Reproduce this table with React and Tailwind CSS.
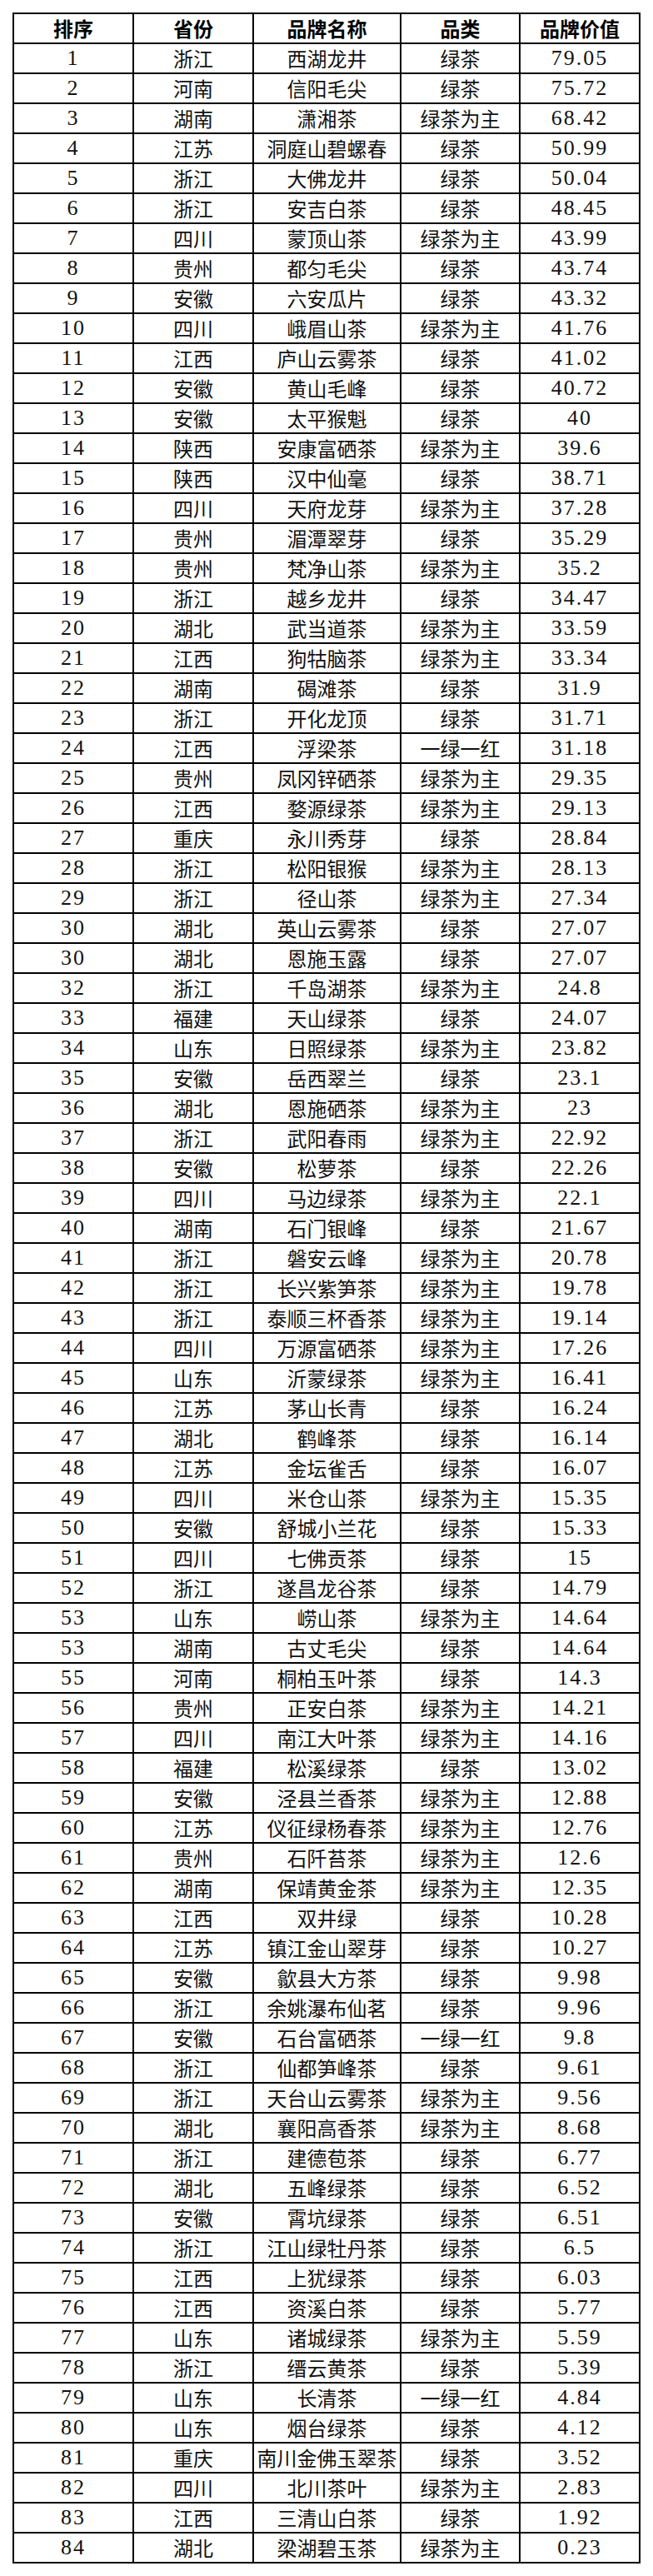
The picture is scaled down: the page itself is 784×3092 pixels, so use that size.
import React from "react";

const raw = `1|浙江|西湖龙井|绿茶|79.05
2|河南|信阳毛尖|绿茶|75.72
3|湖南|潇湘茶|绿茶为主|68.42
4|江苏|洞庭山碧螺春|绿茶|50.99
5|浙江|大佛龙井|绿茶|50.04
6|浙江|安吉白茶|绿茶|48.45
7|四川|蒙顶山茶|绿茶为主|43.99
8|贵州|都匀毛尖|绿茶|43.74
9|安徽|六安瓜片|绿茶|43.32
10|四川|峨眉山茶|绿茶为主|41.76
11|江西|庐山云雾茶|绿茶|41.02
12|安徽|黄山毛峰|绿茶|40.72
13|安徽|太平猴魁|绿茶|40
14|陕西|安康富硒茶|绿茶为主|39.6
15|陕西|汉中仙毫|绿茶|38.71
16|四川|天府龙芽|绿茶为主|37.28
17|贵州|湄潭翠芽|绿茶|35.29
18|贵州|梵净山茶|绿茶为主|35.2
19|浙江|越乡龙井|绿茶|34.47
20|湖北|武当道茶|绿茶为主|33.59
21|江西|狗牯脑茶|绿茶为主|33.34
22|湖南|碣滩茶|绿茶|31.9
23|浙江|开化龙顶|绿茶|31.71
24|江西|浮梁茶|一绿一红|31.18
25|贵州|凤冈锌硒茶|绿茶为主|29.35
26|江西|婺源绿茶|绿茶为主|29.13
27|重庆|永川秀芽|绿茶|28.84
28|浙江|松阳银猴|绿茶为主|28.13
29|浙江|径山茶|绿茶为主|27.34
30|湖北|英山云雾茶|绿茶|27.07
30|湖北|恩施玉露|绿茶|27.07
32|浙江|千岛湖茶|绿茶为主|24.8
33|福建|天山绿茶|绿茶|24.07
34|山东|日照绿茶|绿茶为主|23.82
35|安徽|岳西翠兰|绿茶|23.1
36|湖北|恩施硒茶|绿茶为主|23
37|浙江|武阳春雨|绿茶为主|22.92
38|安徽|松萝茶|绿茶|22.26
39|四川|马边绿茶|绿茶为主|22.1
40|湖南|石门银峰|绿茶|21.67
41|浙江|磐安云峰|绿茶为主|20.78
42|浙江|长兴紫笋茶|绿茶为主|19.78
43|浙江|泰顺三杯香茶|绿茶为主|19.14
44|四川|万源富硒茶|绿茶为主|17.26
45|山东|沂蒙绿茶|绿茶为主|16.41
46|江苏|茅山长青|绿茶|16.24
47|湖北|鹤峰茶|绿茶|16.14
48|江苏|金坛雀舌|绿茶|16.07
49|四川|米仓山茶|绿茶为主|15.35
50|安徽|舒城小兰花|绿茶|15.33
51|四川|七佛贡茶|绿茶|15
52|浙江|遂昌龙谷茶|绿茶|14.79
53|山东|崂山茶|绿茶为主|14.64
53|湖南|古丈毛尖|绿茶|14.64
55|河南|桐柏玉叶茶|绿茶|14.3
56|贵州|正安白茶|绿茶为主|14.21
57|四川|南江大叶茶|绿茶为主|14.16
58|福建|松溪绿茶|绿茶|13.02
59|安徽|泾县兰香茶|绿茶为主|12.88
60|江苏|仪征绿杨春茶|绿茶为主|12.76
61|贵州|石阡苔茶|绿茶为主|12.6
62|湖南|保靖黄金茶|绿茶为主|12.35
63|江西|双井绿|绿茶|10.28
64|江苏|镇江金山翠芽|绿茶|10.27
65|安徽|歙县大方茶|绿茶|9.98
66|浙江|余姚瀑布仙茗|绿茶|9.96
67|安徽|石台富硒茶|一绿一红|9.8
68|浙江|仙都笋峰茶|绿茶|9.61
69|浙江|天台山云雾茶|绿茶为主|9.56
70|湖北|襄阳高香茶|绿茶为主|8.68
71|浙江|建德苞茶|绿茶|6.77
72|湖北|五峰绿茶|绿茶|6.52
73|安徽|霄坑绿茶|绿茶|6.51
74|浙江|江山绿牡丹茶|绿茶|6.5
75|江西|上犹绿茶|绿茶|6.03
76|江西|资溪白茶|绿茶|5.77
77|山东|诸城绿茶|绿茶为主|5.59
78|浙江|缙云黄茶|绿茶|5.39
79|山东|长清茶|一绿一红|4.84
80|山东|烟台绿茶|绿茶|4.12
81|重庆|南川金佛玉翠茶|绿茶|3.52
82|四川|北川茶叶|绿茶为主|2.83
83|江西|三清山白茶|绿茶|1.92
84|湖北|梁湖碧玉茶|绿茶为主|0.23`;

const rows = raw.split("\n").map((l) => l.split("|"));

const cell =
  "flex items-center justify-center overflow-hidden whitespace-nowrap border-r-2 border-b-2 border-black h-[36px]";
const cjk =
  "font-['Noto_Sans_CJK_SC',sans-serif] text-[24px] leading-none text-[#111]";
const num =
  "font-['Liberation_Serif',serif] text-[26px] leading-none tracking-[2px] text-[#111]";

export default function App() {
  return (
    <div className="min-h-[3092px] w-[784px] bg-white pt-[15px] pl-[15px]">
      <div className="w-[754px] border-t-2 border-l-2 border-black">
        <div className="grid grid-cols-[144px_144px_177px_143px_144px]">
          {["排序", "省份", "品牌名称", "品类", "品牌价值"].map((h) => (
            <div key={h} className={cell}>
              <span className={cjk + " font-bold text-black"}>{h}</span>
            </div>
          ))}
          {rows.map((r, i) => (
            <React.Fragment key={i}>
              <div className={cell}>
                <span className={num}>{r[0]}</span>
              </div>
              <div className={cell}>
                <span className={cjk}>{r[1]}</span>
              </div>
              <div className={cell}>
                <span className={cjk}>{r[2]}</span>
              </div>
              <div className={cell}>
                <span className={cjk}>{r[3]}</span>
              </div>
              <div className={cell}>
                <span className={num}>{r[4]}</span>
              </div>
            </React.Fragment>
          ))}
        </div>
      </div>
    </div>
  );
}
